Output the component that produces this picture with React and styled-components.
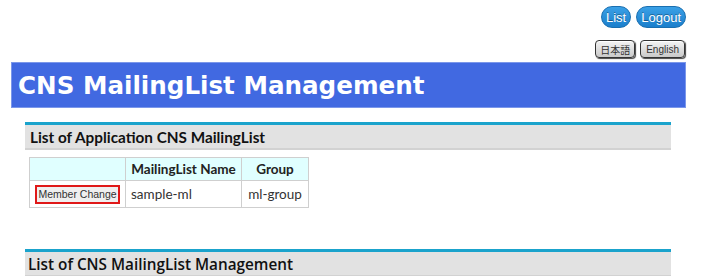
import React from 'react';
import styled, { createGlobalStyle } from 'styled-components';

const GlobalStyle = createGlobalStyle`
	body {
		margin: 0;
		background: #fff;
		font-family: "DejaVu Sans", Verdana, sans-serif;
		color: #222;
	}
`;

const Page = styled.div`
	width: 675px;
	margin-left: 11px;
	padding-top: 6px;
`;

const TopNav = styled.div`
	display: flex;
	justify-content: flex-end;
	gap: 5px;
`;

const PillButton = styled.button`
	height: 22px;
	padding: 0 4px;
	border: 1px solid #1a6fb0;
	border-radius: 11px;
	background: linear-gradient(#3aa0e6, #1b7fcc);
	color: #fff;
	font-family: "Liberation Sans", Arial, sans-serif;
	font-size: 13px;
	text-shadow: 0 -1px 0 rgba(0, 0, 0, .35);
	cursor: pointer;
`;

const LangNav = styled.div`
	display: flex;
	justify-content: flex-end;
	gap: 5px;
	margin-top: 12px;
	padding-right: 1px;
`;

const LangButton = styled.button`
	height: 18px;
	padding: 0 ${props => props.pad}px;
	border: 1px solid #333;
	border-radius: 4px;
	background: linear-gradient(#f4f4f4, #c9c9c9);
	box-shadow: inset 0 1px 0 #fff, 1px 1px 1px #444;
	color: #333;
	font-family: "Liberation Sans", "Noto Sans CJK JP", Arial, sans-serif;
	font-size: 10px;
	cursor: pointer;
`;

const TitleBar = styled.div`
	margin-top: 4px;
	height: 44px;
	border: 1px solid #7b97ea;
	background: #4169e1;
	display: flex;
	align-items: center;
	padding-left: 6px;

	h1 {
		margin: 0;
		color: #fff;
		font-size: 24.6px;
		font-weight: bold;
	}
`;

const Section = styled.section`
	margin: 14px 15px 0 14px;
`;

const SectionHead = styled.div`
	border-top: 3px solid #1aa3cc;
	border-bottom: 2px solid #d2d2d2;
	background: #e2e2e2;
	height: 23px;
	display: flex;
	align-items: center;
	padding-left: ${props => props.light ? 3 : 5}px;

	h2 {
		margin: 0;
		font-size: 15.3px;
		font-weight: ${props => props.light ? 600 : 'bold'};
		font-family: ${props => props.light ? '"Open Sans", sans-serif' : 'Lato, sans-serif'};
		color: #111;
	}
`;

const Table = styled.table`
	margin: 7px 0 0 4px;
	border-collapse: collapse;
	table-layout: fixed;
	width: 280px;
	font-family: Lato, sans-serif;
	font-size: 13.5px;

	th, td {
		border: 1px solid #cfcfcf;
		padding: 0 5px;
		text-align: center;
		white-space: nowrap;
	}

	th {
		background: #e0ffff;
		height: 22px;
		font-weight: bold;
		color: #222;
	}

	td {
		height: 26px;
		color: #333;
	}
`;

const Cell = styled.td`
	&& {
		text-align: ${props => props.align || 'center'};
	}
`;

const ChangeButton = styled.button`
	height: 19px;
	padding: 0 1px;
	border: 2px solid #e01818;
	background: #efefef;
	color: #333;
	font-family: "Liberation Sans", Arial, sans-serif;
	font-size: 10.5px;
	white-space: nowrap;
	cursor: pointer;
`;

const Spacer = styled.div`
	height: 27px;
`;

export default function App() {
	return (
		<>
			<GlobalStyle />
			<Page>
				<TopNav>
					<PillButton>List</PillButton>
					<PillButton>Logout</PillButton>
				</TopNav>
				<LangNav>
					<LangButton pad={4}>日本語</LangButton>
					<LangButton pad={5}>English</LangButton>
				</LangNav>
				<TitleBar>
					<h1>CNS MailingList Management</h1>
				</TitleBar>
				<Section>
					<SectionHead>
						<h2>List of Application CNS MailingList</h2>
					</SectionHead>
					<Table>
						<colgroup>
							<col style={{ width: 96 }} />
							<col style={{ width: 116 }} />
							<col style={{ width: 67 }} />
						</colgroup>
						<thead>
							<tr>
								<th></th>
								<th>MailingList Name</th>
								<th>Group</th>
							</tr>
						</thead>
						<tbody>
							<tr>
								<Cell><ChangeButton>Member Change</ChangeButton></Cell>
								<Cell align="left">sample-ml</Cell>
								<Cell>ml-group</Cell>
							</tr>
						</tbody>
					</Table>
				</Section>
				<Spacer />
				<Section>
					<SectionHead light>
						<h2>List of CNS MailingList Management</h2>
					</SectionHead>
				</Section>
			</Page>
		</>
	);
}
